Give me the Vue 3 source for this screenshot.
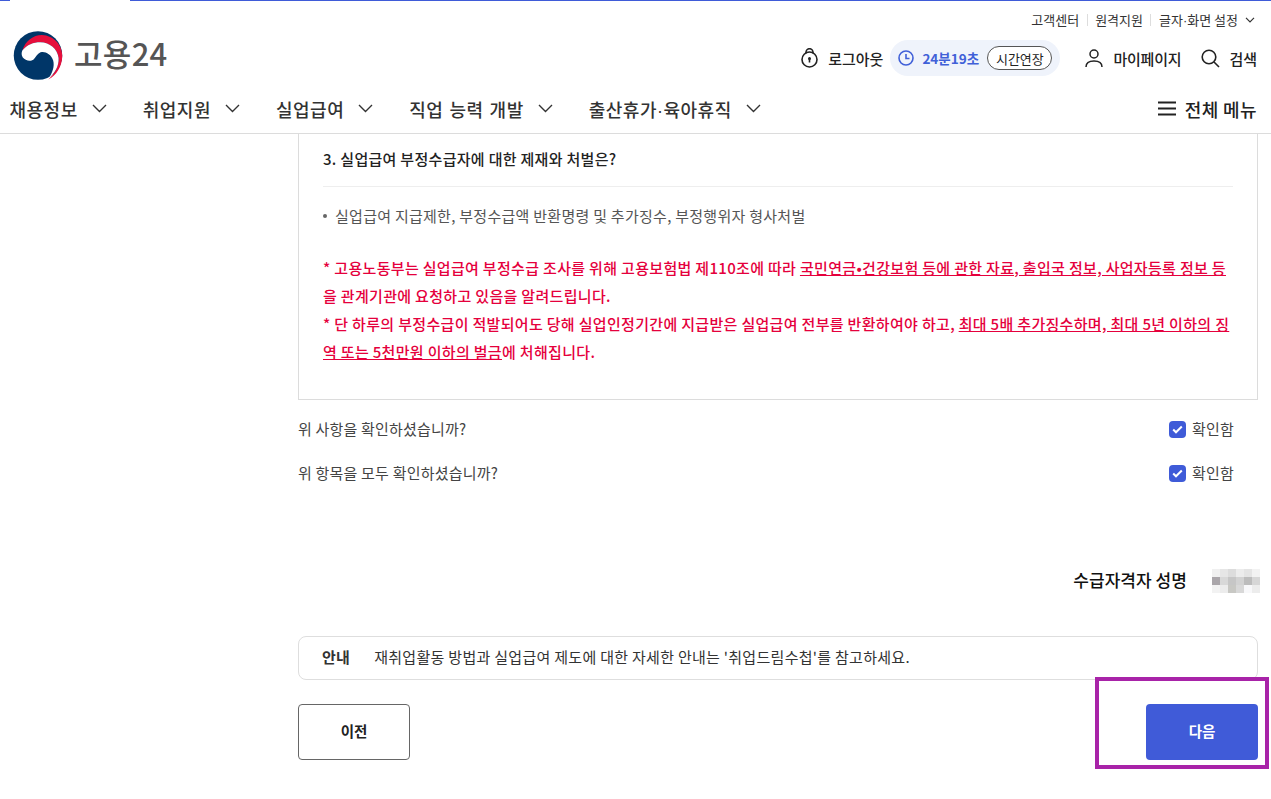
<script setup>
const nav = [
  { a: '채용정보' },
  { a: '취업지원' },
  { a: '실업급여' },
  { a: '직업 능력 개발', wide: true },
  { a: '출산휴가', b: '육아휴직' }
]
const blur = ['#f0f0f0','#e6e6e6','#dcdcdc','#ececec','#e4e4e4','#f2f2f2','#aaa6aa','#d8d8d8','#c6c6c6','#d2d2d2','#bcbcbc','#d6d6d6','#f2f2f2','#ececec','#c8c8c4','#d8d8d8','#f8f8fa','#ececec']
</script>

<template>
  <div class="page">
    <div class="topline"><i class="tl a"></i><i class="tl b"></i><i class="tl c"></i></div>
    <header class="header">
      <div class="util">
        <span>고객센터</span><i class="sep"></i><span>원격지원</span><i class="sep"></i><span>글자<span class="ndot">·</span>화면 설정</span>
        <svg class="chev-s" width="10" height="6" viewBox="0 0 10 6"><path d="M1 .8 5 4.800 9 .8" fill="none" stroke="#333" stroke-width="1.2"/></svg>
      </div>
      <div class="brandrow">
        <div class="logo">
          <svg width="50" height="49" viewBox="0 0 100 100">
            <circle cx="50" cy="50" r="49.500" fill="#003668"/>
            <path d="M18 40C24 20 40 8 58 8 82 9 100 28 99.500 52 99 72 88 90 71 99 84 87 93 72 92 55 90 37 74 23 55 23 40 23 28 28 18 40Z" fill="#e60f3c"/>
            <path d="M18 40C28 28 40 23 55 23 74 23 90 37 92 55 93 72 84 87 71 97 80 85 84 72 81 60 77 48 66 42 58 43 50 44 47 52 41 58 34 63 24 60 19 54 16 50 16 45 18 40Z" fill="#fff"/>
          </svg>
          <span class="logotext">고용24</span>
        </div>
        <div class="actions">
          <div class="act logout">
            <svg width="19" height="20" viewBox="0 0 19 20" fill="none" stroke="#222" stroke-width="1.600"><circle cx="9.500" cy="11.500" r="7.500"/><path d="M6 5.500V4.200a3.500 3.500 0 0 1 7 0v1.300"/><circle cx="9.500" cy="10.500" r="1.500" fill="#222" stroke="none"/><path d="M9.500 11v3.500"/></svg>
            <span>로그아웃</span>
          </div>
          <div class="timer">
            <svg class="clock" width="16" height="16" viewBox="0 0 16 16" fill="none" stroke="#4060d8" stroke-width="1.600"><circle cx="8" cy="8" r="7"/><path d="M8 4v4.500h3.500"/></svg>
            <span class="time">24분19초</span>
            <button class="extend">시간연장</button>
          </div>
          <div class="act mypage">
            <svg width="18" height="18" viewBox="0 0 18 18" fill="none" stroke="#222" stroke-width="1.500"><circle cx="9" cy="5" r="4"/><path d="M1 18c0-4 3.500-6 8-6s8 2 8 6"/></svg>
            <span>마이페이지</span>
          </div>
          <div class="act search">
            <svg width="19" height="19" viewBox="0 0 19 19" fill="none" stroke="#222" stroke-width="1.600"><circle cx="8" cy="8" r="6.800"/><path d="m13 13 5 5"/></svg>
            <span>검색</span>
          </div>
        </div>
      </div>
      <nav class="nav">
        <div class="navlist">
          <div v-for="n in nav" :key="n.a" class="navitem" :class="{ wide: n.wide }">
            <span>{{ n.a }}<template v-if="n.b"><span class="ndot">·</span>{{ n.b }}</template></span>
            <svg width="15" height="9" viewBox="0 0 15 9"><path d="M1 1l6.500 6.500L14 1" fill="none" stroke="#333" stroke-width="1.400"/></svg>
          </div>
        </div>
        <div class="allmenu">
          <svg width="18" height="15" viewBox="0 0 18 15" stroke="#222" stroke-width="2"><path d="M0 1.500h18M0 7.500h18M0 13.500h18"/></svg>
          <span>전체 메뉴</span>
        </div>
      </nav>
    </header>

    <main class="main">
      <section class="box">
        <h3 class="q">3. 실업급여 부정수급자에 대한 제재와 처벌은?</h3>
        <p class="bullet"><i class="dot"></i>실업급여 지급제한, 부정수급액 반환명령 및 추가징수, 부정행위자 형사처벌</p>
        <div class="warn">
          <p>* 고용노동부는 실업급여 부정수급 조사를 위해 고용보험법 제110조에 따라 <u>국민연금•건강보험 등에 관한 자료, 출입국 정보, 사업자등록 정보 등</u>을 관계기관에 요청하고 있음을 알려드립니다.</p>
          <p>* 단 하루의 부정수급이 적발되어도 당해 실업인정기간에 지급받은 실업급여 전부를 반환하여야 하고, <u>최대 5배 추가징수하며, 최대 5년 이하의 징역 또는 5천만원 이하의 벌금</u>에 처해집니다.</p>
        </div>
      </section>

      <div class="confirm">
        <span>위 사항을 확인하셨습니까?</span>
        <label class="chk"><i class="cb"><svg width="11" height="9" viewBox="0 0 11 9"><path d="M1.200 4.500l2.800 2.800L9.800 1.500" fill="none" stroke="#fff" stroke-width="2"/></svg></i>확인함</label>
      </div>
      <div class="confirm second">
        <span>위 항목을 모두 확인하셨습니까?</span>
        <label class="chk"><i class="cb"><svg width="11" height="9" viewBox="0 0 11 9"><path d="M1.200 4.500l2.800 2.800L9.800 1.500" fill="none" stroke="#fff" stroke-width="2"/></svg></i>확인함</label>
      </div>

      <div class="signer">
        <strong>수급자격자 성명</strong>
        <div class="mosaic"><i v-for="(c, i) in blur" :key="i" :style="{ background: c }"></i></div>
      </div>

      <div class="notice">
        <b>안내</b>
        <span>재취업활동 방법과 실업급여 제도에 대한 자세한 안내는 '취업드림수첩'를 참고하세요.</span>
      </div>

      <div class="buttons">
        <button class="btn prev">이전</button>
        <button class="btn next">다음</button>
      </div>
    </main>
    <div class="highlight"></div>
  </div>
</template>

<style>
html, body { margin: 0; background: #fff; }
</style>

<style scoped>
.page {
  position: relative;
  width: 1271px;
  height: 799px;
  overflow: hidden;
  background: #fff;
  font-family: "Noto Sans CJK KR", "Noto Sans", sans-serif;
  color: #222;
}
.topline { display: flex; height: 1px; }
.tl { display: block; height: 1px; }
.tl.a { width: 10px; background: #3f5bd8; }
.tl.b { width: 120px; background: #fff; }
.tl.c { flex: 1; background: #3f5bd8; }
.header {
  height: 133px;
  box-sizing: border-box;
  border-bottom: 1px solid #dcdcdc;
  display: flex;
  flex-direction: column;
}
.ndot { font-family: "Liberation Sans", sans-serif; }
.util {
  height: 27px;
  padding: 10px 16px 0 0;
  box-sizing: border-box;
  display: flex;
  justify-content: flex-end;
  align-items: center;
  font-size: 13px;
  color: #333;
}
.sep { width: 1px; height: 12px; background: #ddd; margin: 0 7.500px; }
.chev-s { margin-left: 7px; }
.brandrow {
  height: 56px;
  box-sizing: border-box;
  display: flex;
  justify-content: space-between;
  align-items: center;
  padding: 4px 14px 0 13px;
}
.logo { display: flex; align-items: center; gap: 11px; margin-top: -6px; }
.logotext { font-size: 31px; font-weight: 500; color: #555; line-height: 1; letter-spacing: 0.3px; margin-bottom: 6px; }
.actions { display: flex; align-items: center; }
.act { display: flex; align-items: center; font-size: 15px; font-weight: 500; color: #222; gap: 9px; }
.timer {
  display: flex;
  align-items: center;
  height: 36px;
  background: #eff3fb;
  border-radius: 18px;
  margin-left: 7px;
  padding: 0 8px;
  box-sizing: border-box;
  width: 170px;
}
.clock { flex: none; }
.time { color: #4060d8; font-size: 13.500px; font-weight: 700; margin-left: 8px; white-space: nowrap; flex: none; width: 57px; }
.extend {
  margin-left: 8px;
  height: 24px;
  width: 65px;
  flex: none;
  padding: 0;
  border: 1px solid #555;
  border-radius: 12px;
  background: #fff;
  font: 400 13px "Noto Sans CJK KR", sans-serif;
  color: #222;
}
.mypage { margin-left: 25px; gap: 10px; letter-spacing: -0.2px; }
.search { margin-left: 20px; gap: 9px; }
.nav {
  flex: 1;
  display: flex;
  justify-content: space-between;
  align-items: center;
  padding: 0 14px 0 9.500px;
}
.navlist { display: flex; gap: 36px; }
.navitem { display: flex; align-items: center; gap: 14px; font-size: 18px; font-weight: 500; color: #333; letter-spacing: 0.5px; white-space: nowrap; }
.navitem.wide { word-spacing: 1.500px; }
.allmenu { display: flex; align-items: center; gap: 8.500px; font-size: 18px; font-weight: 500; color: #222; letter-spacing: 0.4px; }
.main { padding: 0 13px 0 298px; }
.box {
  height: 266px;
  box-sizing: border-box;
  border: 1px solid #dcdcdc;
  border-top: 0;
  padding: 0 24px;
}
.q {
  margin: 0;
  height: 53px;
  line-height: 49px;
  box-sizing: border-box;
  font-size: 15px;
  letter-spacing: 0.3px;
  font-weight: 500;
  color: #222;
  border-bottom: 1px solid #eee;
}
.bullet {
  margin: 16px 0 0;
  font-size: 15px;
  letter-spacing: 0.27px;
  line-height: 26px;
  color: #555;
  display: flex;
  align-items: center;
}
.dot { width: 4px; height: 4px; border-radius: 50%; background: #666; margin-right: 8px; }
.warn { margin-top: 25px; color: #e5003c; font-size: 15px; letter-spacing: 0.32px; font-weight: 500; line-height: 28px; }
.warn p { margin: 0; }
.confirm {
  height: 57px;
  display: flex;
  justify-content: space-between;
  align-items: center;
  font-size: 15px;
  letter-spacing: 0.2px;
  color: #444;
  padding-right: 24px;
}
.confirm.second { height: 30px; }
.chk { display: flex; align-items: center; gap: 6px; }
.cb {
  width: 17px;
  height: 17px;
  margin-top: 2px;
  border-radius: 4px;
  background: #3f5bd8;
  display: flex;
  align-items: center;
  justify-content: center;
}
.signer {
  margin-top: 82px;
  display: flex;
  justify-content: flex-end;
  align-items: center;
  gap: 25px;
  height: 24px;
  margin-right: -2px;
}
.signer strong { font-size: 17px; font-weight: 500; color: #111; margin-bottom: 4px; letter-spacing: 0.05px; }
.mosaic { display: grid; grid-template-columns: repeat(6, 8px); grid-auto-rows: 8px; }
.mosaic i { display: block; }
.notice {
  margin-top: 43px;
  height: 44px;
  box-sizing: border-box;
  border: 1px solid #dedede;
  border-radius: 8px;
  display: flex;
  align-items: center;
  padding: 0 0 3px 23px;
  gap: 24px;
  font-size: 15px;
  letter-spacing: 0.29px;
  color: #333;
}
.notice b { font-weight: 700; }
.buttons { margin-top: 24px; display: flex; justify-content: space-between; }
.btn {
  width: 112px;
  height: 56px;
  border-radius: 4px;
  padding: 0 0 3px;
  font: 700 14.500px "Noto Sans CJK KR", sans-serif;
}
.prev { background: #fff; border: 1px solid #666; color: #222; }
.next { background: #405bd8; border: 0; color: #fff; }
.highlight {
  position: absolute;
  left: 1095px;
  top: 677px;
  width: 174px;
  height: 92px;
  box-sizing: border-box;
  border: 4px solid #a823a8;
  pointer-events: none;
}
</style>
